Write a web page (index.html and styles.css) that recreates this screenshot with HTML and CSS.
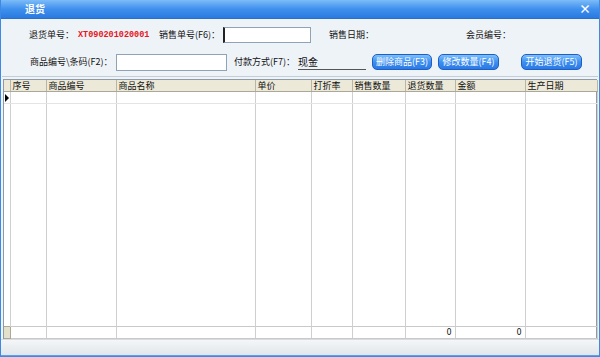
FILE: index.html
```html
<!DOCTYPE html>
<html lang="zh-CN">
<head>
    <meta charset="UTF-8">
    <title>退货</title>
    <link rel="stylesheet" href="styles.css">
</head>
<body>
    <div class="window">
        <div class="titlebar">
            <span class="title">退货</span>
            <span class="close">&#215;</span>
        </div>

        <div class="panel">
            <div class="row row-one">
                <span class="label l-return">退货单号：</span>
                <span class="order-no">XT090201020001</span>
                <span class="label l-sale">销售单号(F6)：</span>
                <input type="text" class="field f-sale" value="">
                <span class="label l-date">销售日期：</span>
                <span class="label l-member">会员编号：</span>
            </div>
            <div class="row row-two">
                <span class="label l-code">商品编号\条码(F2)：</span>
                <input type="text" class="field f-code">
                <span class="label l-pay">付款方式(F7)：</span>
                <span class="pay">现金</span>
                <button type="button" class="button b-del">删除商品(F3)</button>
                <button type="button" class="button b-edit">修改数量(F4)</button>
                <button type="button" class="button b-start">开始退货(F5)</button>
            </div>
        </div>

        <div class="grid-wrap">
            <table class="grid">
                <colgroup>
                    <col style="width:6px">
                    <col style="width:36px">
                    <col style="width:70px">
                    <col style="width:139px">
                    <col style="width:56px">
                    <col style="width:41px">
                    <col style="width:53px">
                    <col style="width:50px">
                    <col style="width:70px">
                    <col style="width:72px">
                </colgroup>
                <thead>
                    <tr>
                        <th></th>
                        <th>序号</th>
                        <th>商品编号</th>
                        <th>商品名称</th>
                        <th>单价</th>
                        <th>打折率</th>
                        <th>销售数量</th>
                        <th>退货数量</th>
                        <th>金额</th>
                        <th>生产日期</th>
                    </tr>
                </thead>
                <tbody>
                    <tr class="current">
                        <td class="rowhead"><span class="arrow"></span></td>
                        <td></td><td></td><td></td><td></td><td></td><td></td><td></td><td></td><td></td>
                    </tr>
                    <tr class="filler">
                        <td class="blank"></td>
                        <td></td><td></td><td></td><td></td><td></td><td></td><td></td><td></td><td></td>
                    </tr>
                    <tr class="total">
                        <td class="rowhead"></td>
                        <td></td><td></td><td></td><td></td><td></td><td></td>
                        <td class="num">0</td>
                        <td class="num">0</td>
                        <td></td>
                    </tr>
                </tbody>
            </table>
        </div>

        <div class="statusbar"></div>
    </div>
</body>
</html>
```

FILE: styles.css
```css
html, body {
    margin: 0;
    padding: 0;
}
body {
    font-family: "Noto Sans CJK SC", "DejaVu Sans", sans-serif;
    font-size: 9px;
    color: #111;
    background: #fff;
}
.window {
    width: 600px;
    height: 357px;
    box-sizing: border-box;
    border: 1px solid #3d8ae6;
    border-top: none;
    display: flex;
    flex-direction: column;
    background: #eef3f8;
}
.titlebar {
    height: 18px;
    flex: none;
    background: linear-gradient(#7cbcf8, #3f90ee 50%, #2a7ae0);
    display: flex;
    align-items: center;
    justify-content: space-between;
    padding: 0 8px 0 24px;
    border-bottom: 1px solid #2a6fc8;
}
.title {
    color: #fff;
    font-weight: bold;
    font-size: 10px;
    line-height: 18px;
}
.close {
    color: #fff;
    font-weight: bold;
    font-size: 12px;
    line-height: 18px;
}
.panel {
    height: 57px;
    flex: none;
    border-bottom: 1px solid #c4cdd6;
    margin: 0 1px;
}
.row {
    display: flex;
    align-items: center;
    white-space: nowrap;
}
.row-one {
    height: 17px;
    margin-top: 7px;
    padding-left: 27px;
}
.row-two {
    height: 18px;
    margin-top: 10px;
    padding-left: 28px;
}
.label {
    line-height: 14px;
    flex: none;
}
.l-return {
    width: 49px;
}
.order-no {
    width: 81px;
    flex: none;
    color: #e8151b;
    font-weight: bold;
    font-family: "Liberation Mono", "DejaVu Sans Mono", monospace;
    font-size: 8.5px;
}
.l-sale {
    width: 64px;
}
.field {
    height: 16px;
    flex: none;
    box-sizing: border-box;
    border: 1px solid #8fa2b6;
    background: #fff;
    padding: 0 3px;
    font: inherit;
}
.f-sale {
    width: 88px;
    border-left: 2px solid #222;
}
.l-date {
    width: 137px;
    margin-left: 18px;
}
.f-code {
    width: 111px;
    height: 17px;
}
.l-code {
    width: 86px;
}
.l-pay {
    width: 64px;
    margin-left: 7px;
}
.pay {
    width: 68px;
    flex: none;
    border-bottom: 1px solid #555;
    line-height: 15px;
    font-size: 10px;
}
.button {
    height: 16px;
    flex: none;
    padding: 0;
    border: 1px solid #1f5fc4;
    border-radius: 5px;
    background: linear-gradient(#7ec0fb, #3d8ff0 50%, #2a79e4);
    color: #fff;
    font: inherit;
    font-size: 9px;
    line-height: 14px;
    text-align: center;
    cursor: pointer;
}
.b-del {
    width: 60px;
    margin-left: 6px;
}
.b-edit {
    width: 61px;
    margin-left: 6px;
}
.b-start {
    width: 61px;
    margin-left: 22px;
}
.grid-wrap {
    flex: 1;
    margin: 2px 2px 0 2px;
    border: 1px solid #8e9aa6;
    border-bottom: none;
    background: #fff;
    display: flex;
}
.grid {
    border-collapse: collapse;
    table-layout: fixed;
    width: 593px;
    height: 100%;
}
.grid th, .grid td {
    border: 1px solid #cfcfcf;
    border-top: none;
    border-bottom: none;
    padding: 0 2px;
    overflow: hidden;
    white-space: nowrap;
}
.grid th {
    height: 11px;
    background: #ece9d8;
    font-weight: normal;
    text-align: left;
    line-height: 11px;
    border-left-color: #b9b6a4;
    border-right-color: #b9b6a4;
    border-bottom: 1px solid #aca899;
}
.grid th:first-child,
.grid td:first-child {
    border-left: none;
}
.current td {
    height: 11px;
    border-bottom: 1px solid #e4e4e4;
}
.rowhead {
    padding: 0 !important;
    background: #ece9d8;
    position: relative;
}
.arrow {
    position: absolute;
    left: 1px;
    top: 2px;
    width: 0;
    height: 0;
    border-top: 4px solid transparent;
    border-bottom: 4px solid transparent;
    border-left: 4px solid #000;
}
.current .rowhead {
    background: #fff;
}
.blank {
    background: #fff;
}
.total td {
    height: 11px;
    line-height: 11px;
    border-top: 1px solid #c9c9c9;
    border-bottom: 1px solid #c9c9c9;
    font-family: "DejaVu Sans", sans-serif;
    font-size: 8px;
}
.total .rowhead {
    background: #e3e0cc;
    border: 1px solid #aca899;
}
.num {
    text-align: right;
    padding-right: 3px !important;
}
.statusbar {
    height: 15px;
    flex: none;
    background: linear-gradient(#f4f6f8, #e2e6ea);
    border-top: 1px solid #d6dce2;
    border-bottom: 1px solid #5aa0ec;
}
```
